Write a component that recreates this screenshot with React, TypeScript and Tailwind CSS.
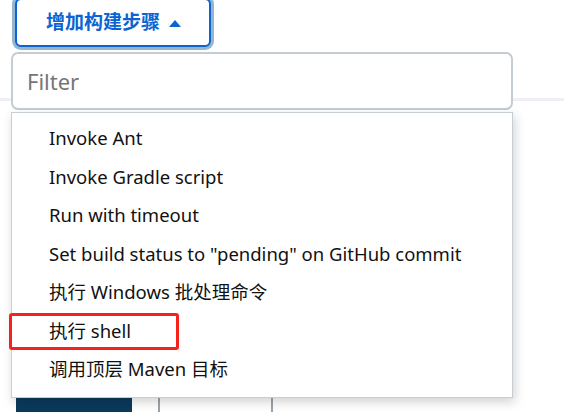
import React from "react";

const items = [
  "Invoke Ant",
  "Invoke Gradle script",
  "Run with timeout",
  'Set build status to "pending" on GitHub commit',
  "执行 Windows 批处理命令",
  "执行 shell",
  "调用顶层 Maven 目标",
];

const font = { fontFamily: '"Noto Sans", "Noto Sans CJK SC", sans-serif' };

export default function App() {
  return (
    <div className="relative w-[564px] h-[412px] overflow-hidden bg-white" style={font}>
      {/* page underneath */}
      <div className="pl-[15px] -mt-[2px]">
        <button className="flex items-center h-[49px] w-[196px] pl-[29px] gap-[9px] rounded-[6px] border-2 border-[#0b64d2] bg-white text-[#0b64d2] text-[19px] font-bold shadow-[0_0_0_3px_#93b7d3]">
          <span>增加构建步骤</span>
          <svg width="12" height="7" viewBox="0 0 12 7" className="mt-[1px]">
            <path d="M0 7 L6 0 L12 7 Z" fill="#0b64d2" />
          </svg>
        </button>
      </div>
      <div className="mt-[51px] h-[3px] bg-[#eeeef4]" />
      <div className="mt-[290px] flex gap-[26px] pl-[16px]">
        <div className="w-[116px] h-[40px] rounded-[6px] bg-[#0b3a5c]" />
        <div className="w-[115px] h-[40px] rounded-[6px] border-2 border-[#9ca4ab] bg-white" />
      </div>

      {/* dropdown overlay */}
      <div className="absolute left-[11px] top-[52px] w-[502px]">
        <div className="h-[58px] rounded-[7px] border-2 border-[#c3cdd3] bg-white flex items-center pl-[14px] text-[22px] text-[#767676]">
          Filter
        </div>
        <div className="mt-[2px] border border-[#c6ced3] bg-white pt-[6px] pb-[8px] shadow-[2px_4px_10px_rgba(0,0,0,0.18)]">
          {items.map((t) => (
            <div key={t} className="relative h-[38.5px] flex items-center pl-[37px] text-[18.5px] text-[#111]">
              {t}
              {t === "执行 shell" && (
                <div className="absolute left-[-3px] top-[1px] w-[170px] h-[37px] rounded-[3px] border-[3px] border-[#f5231b]" />
              )}
            </div>
          ))}
        </div>
      </div>
    </div>
  );
}
